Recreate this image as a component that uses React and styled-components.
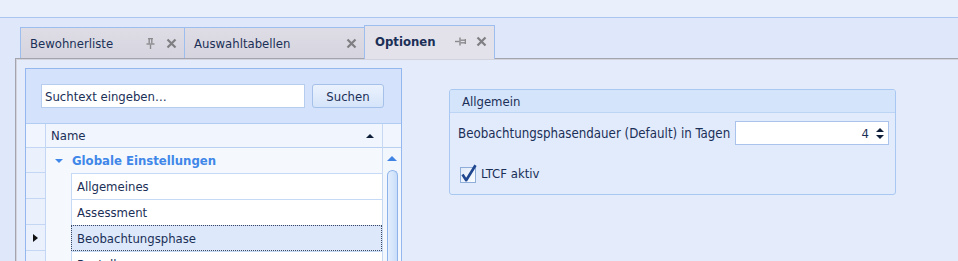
import React from "react";
import styled, { createGlobalStyle } from "styled-components";

const FONT = `"DejaVu Sans Condensed", "DejaVu Sans", "Liberation Sans", sans-serif`;
const NAVY = "#1b2f57";

const GlobalStyle = createGlobalStyle`
  html, body { margin: 0; padding: 0; background: #dfe8fa; }
  body { font-family: ${FONT}; }
  * { box-sizing: border-box; }
`;

const Page = styled.div`
  width: 958px;
  height: 261px;
  overflow: hidden;
  display: flex;
  flex-direction: column;
  background: #dfe8fa;
  font-family: ${FONT};
  font-size: 13px;
  color: ${NAVY};
`;

const TopBar = styled.div`
  height: 18px;
  flex-shrink: 0;
  background: #e9f0fc;
  border-bottom: 1px solid #aac6f0;
`;

const TabStrip = styled.div`
  height: 40px;
  flex-shrink: 0;
  display: flex;
  align-items: flex-end;
  padding-left: 20px;
  position: relative;
  z-index: 1;
`;

const Tab = styled.div`
  width: ${(p) => p.$w}px;
  height: ${(p) => (p.$active ? 34 : 31)}px;
  margin-left: ${(p) => (p.$first ? 0 : -1)}px;
  margin-bottom: ${(p) => (p.$active ? -1 : 0)}px;
  border: 1px solid #9dbdee;
  border-bottom: none;
  background: ${(p) =>
    p.$active ? "#e3e2ea" : "linear-gradient(#dedde6, #d6d5df)"};
  display: flex;
  align-items: center;
  padding: ${(p) => (p.$active ? "0 7px 2px 10px" : "0 7px 0 9px")};
  font-weight: ${(p) => (p.$active ? "bold" : "normal")};
  color: ${NAVY};
  white-space: nowrap;
`;

const TabLabel = styled.span`
  flex: 1;
`;

const TabIcons = styled.span`
  display: flex;
  align-items: center;
  gap: 10px;
`;

const Frame = styled.div`
  flex: 1;
  margin-left: 15px;
  border-top: 1px solid #a3a4ad;
  border-left: 1px solid #a3a4ad;
  box-shadow: inset 1px 1px 0 #d2d3dc;
  background: #e4ecfb;
  display: flex;
  padding: 9px 0 0 9px;
  min-height: 0;
`;

const LeftPanel = styled.div`
  width: 377px;
  flex-shrink: 0;
  border: 1px solid #93b7ee;
  border-bottom: none;
  background: #d4e3fb;
  display: flex;
  flex-direction: column;
`;

const SearchBar = styled.div`
  display: flex;
  gap: 7px;
  padding: 15px 15px 15px 15px;
`;

const SearchInput = styled.input`
  width: 264px;
  height: 24px;
  border: 1px solid #b7cdef;
  background: #fff;
  font-family: ${FONT};
  font-size: 13px;
  color: ${NAVY};
  padding: 0 3px;
  outline: none;
  &::placeholder { color: ${NAVY}; opacity: 1; }
`;

const Button = styled.button`
  width: 72px;
  height: 24px;
  border: 1px solid #a5c1ea;
  border-radius: 3px;
  background: linear-gradient(#ebf2fd, #d5e4fa);
  font-family: ${FONT};
  font-size: 13px;
  color: ${NAVY};
  padding: 0;
`;

const Grid = styled.div`
  flex: 1;
  display: flex;
  background: #fff;
  border-top: 1px solid #b3cdf2;
`;

const GridMain = styled.div`
  flex: 1;
  display: flex;
  flex-direction: column;
`;

const Row = styled.div`
  display: flex;
  height: ${(p) => p.$h}px;
  flex-shrink: 0;
`;

const Indicator = styled.div`
  width: 20px;
  border-right: 1px solid #c3d7f4;
  border-bottom: 1px solid #c3d7f4;
  background: ${(p) => (p.$header ? "#f1f6fe" : "#eaf1fc")};
  display: flex;
  align-items: center;
  justify-content: center;
`;

const HeaderCell = styled.div`
  flex: 1;
  background: #f1f6fe;
  border-bottom: 1px solid #bad0f2;
  display: flex;
  align-items: center;
  justify-content: space-between;
  padding: 0 8px 0 5px;
`;

const GroupCell = styled.div`
  flex: 1;
  background: #f5f9fe;
  display: flex;
  align-items: center;
  gap: 9px;
  padding-left: 9px;
  font-weight: bold;
  color: #3f87e8;
`;

const Indent = styled.div`
  width: 25px;
  background: #f5f9fe;
`;

const Cell = styled.div`
  flex: 1;
  background: ${(p) => (p.$selected ? "#dde9fb" : "#fff")};
  border-top: 1px solid #c6daf6;
  border-left: 1px solid #c6daf6;
  outline: ${(p) => (p.$selected ? "1px dotted #3e4a63" : "none")};
  outline-offset: -1px;
  display: flex;
  align-items: center;
  padding-left: 5px;
  color: ${NAVY};
`;

const ScrollColumn = styled.div`
  width: 19px;
  border-left: 1px solid #c6d8f2;
  display: flex;
  flex-direction: column;
`;

const ScrollCorner = styled.div`
  height: 24px;
  flex-shrink: 0;
  background: #f1f6fe;
  border-bottom: 1px solid #bad0f2;
`;

const ScrollTrack = styled.div`
  flex: 1;
  background: #f2f6fd;
  display: flex;
  flex-direction: column;
  align-items: center;
  padding-top: 8px;
`;

const UpArrow = styled.div`
  width: 0;
  height: 0;
  border-left: 5px solid transparent;
  border-right: 5px solid transparent;
  border-bottom: 5px solid #3f83e3;
`;

const Thumb = styled.div`
  margin-top: 9px;
  width: 11px;
  flex: 1;
  border: 1px solid #8db3ea;
  border-bottom: none;
  border-radius: 6px 6px 0 0;
  background: linear-gradient(90deg, #e3eefd, #c9ddf9);
`;

const Tri = styled.div`
  width: 0;
  height: 0;
  border-left: ${(p) => p.$s}px solid transparent;
  border-right: ${(p) => p.$s}px solid transparent;
  ${(p) =>
    p.$down
      ? `border-top: ${p.$s}px solid ${p.$c};`
      : `border-bottom: ${p.$s}px solid ${p.$c};`}
`;

const RightTri = styled.div`
  width: 0;
  height: 0;
  border-top: 4px solid transparent;
  border-bottom: 4px solid transparent;
  border-left: 5px solid #111;
`;

const OptionsArea = styled.div`
  padding: 21px 0 0 47px;
`;

const GroupBox = styled.div`
  width: 447px;
  height: 106px;
  border: 1px solid #a9c8f1;
  border-radius: 3px;
  background: #e1ebfc;
  display: flex;
  flex-direction: column;
`;

const GroupHeader = styled.div`
  height: 23px;
  background: #d4e4fb;
  border-bottom: 1px solid #bcd4f5;
  border-radius: 2px 2px 0 0;
  display: flex;
  align-items: center;
  padding-left: 12px;
`;

const GroupBody = styled.div`
  padding: 8px 6px 0 8px;
  display: flex;
  flex-direction: column;
`;

const FieldRow = styled.div`
  display: flex;
  align-items: center;
  justify-content: space-between;
  height: 24px;
`;

const FieldLabel = styled.span`
  font-size: 13.2px;
`;

const SpinBox = styled.div`
  width: 154px;
  height: 24px;
  border: 1px solid #a9c3ec;
  background: #fff;
  display: flex;
  align-items: center;
  justify-content: flex-end;
  padding-right: 4px;
  gap: 7px;
`;

const SpinArrows = styled.div`
  display: flex;
  flex-direction: column;
  gap: 3px;
`;

const CheckRow = styled.div`
  display: flex;
  align-items: center;
  gap: 3px;
  margin-top: 19px;
  padding-left: 2px;
`;

const PinIcon = ({ horizontal }) => (
  <svg width="11" height="11" viewBox="0 0 11 11">
    <g fill="#8b8b8e" transform={horizontal ? "rotate(90 5.5 5.5)" : undefined}>
      <rect x="3" y="0" width="5" height="1.3" />
      <rect x="3.5" y="1" width="1.4" height="4.5" />
      <rect x="6.1" y="1" width="1.4" height="4.5" />
      <rect x="1.5" y="5.3" width="8" height="1.4" />
      <rect x="4.8" y="6.5" width="1.4" height="4.5" />
    </g>
  </svg>
);

const CloseIcon = () => (
  <svg width="11" height="11" viewBox="0 0 11 11">
    <path d="M1.5 1.5 L9.5 9.5 M9.5 1.5 L1.5 9.5" stroke="#7f7f83" strokeWidth="2.2" />
  </svg>
);

const CheckIcon = () => (
  <svg width="18" height="19" viewBox="0 0 18 19">
    <defs>
      <linearGradient id="cb" x1="0" y1="0" x2="1" y2="1">
        <stop offset="0" stopColor="#dfe9f8" />
        <stop offset="1" stopColor="#fbfdff" />
      </linearGradient>
    </defs>
    <rect x="0.5" y="3.5" width="15" height="15" fill="url(#cb)" stroke="#8eaed9" />
    <path d="M2.5 10.5 L6.2 16.2 L15.5 1.2" fill="none" stroke="#1f468f" strokeWidth="2.6" strokeLinejoin="round" />
  </svg>
);

const rows = [
  { label: "Allgemeines" },
  { label: "Assessment" },
  { label: "Beobachtungsphase", selected: true },
  { label: "Bestellung" },
];

export default function App() {
  return (
    <Page>
      <GlobalStyle />
      <TopBar />
      <TabStrip>
        <Tab $w={165} $first>
          <TabLabel>Bewohnerliste</TabLabel>
          <TabIcons>
            <PinIcon />
            <CloseIcon />
          </TabIcons>
        </Tab>
        <Tab $w={181}>
          <TabLabel>Auswahltabellen</TabLabel>
          <TabIcons>
            <CloseIcon />
          </TabIcons>
        </Tab>
        <Tab $w={131} $active>
          <TabLabel>Optionen</TabLabel>
          <TabIcons>
            <PinIcon horizontal />
            <CloseIcon />
          </TabIcons>
        </Tab>
      </TabStrip>
      <Frame>
        <LeftPanel>
          <SearchBar>
            <SearchInput placeholder="Suchtext eingeben…" readOnly />
            <Button>Suchen</Button>
          </SearchBar>
          <Grid>
            <GridMain>
              <Row $h={24}>
                <Indicator $header />
                <HeaderCell>
                  <span>Name</span>
                  <Tri $s={4} $c="#0f1f3a" />
                </HeaderCell>
              </Row>
              <Row $h={25}>
                <Indicator />
                <GroupCell>
                  <Tri $s={4} $c="#3f87e8" $down />
                  <span>Globale Einstellungen</span>
                </GroupCell>
              </Row>
              {rows.map((r) => (
                <Row $h={26} key={r.label}>
                  <Indicator>{r.selected && <RightTri />}</Indicator>
                  <Indent />
                  <Cell $selected={r.selected}>{r.label}</Cell>
                </Row>
              ))}
            </GridMain>
            <ScrollColumn>
              <ScrollCorner />
              <ScrollTrack>
                <UpArrow />
                <Thumb />
              </ScrollTrack>
            </ScrollColumn>
          </Grid>
        </LeftPanel>
        <OptionsArea>
          <GroupBox>
            <GroupHeader>Allgemein</GroupHeader>
            <GroupBody>
              <FieldRow>
                <FieldLabel>Beobachtungsphasendauer (Default) in Tagen</FieldLabel>
                <SpinBox>
                  <span>4</span>
                  <SpinArrows>
                    <Tri $s={4} $c="#0f1f3a" />
                    <Tri $s={4} $c="#0f1f3a" $down />
                  </SpinArrows>
                </SpinBox>
              </FieldRow>
              <CheckRow>
                <CheckIcon />
                <span>LTCF aktiv</span>
              </CheckRow>
            </GroupBody>
          </GroupBox>
        </OptionsArea>
      </Frame>
    </Page>
  );
}
